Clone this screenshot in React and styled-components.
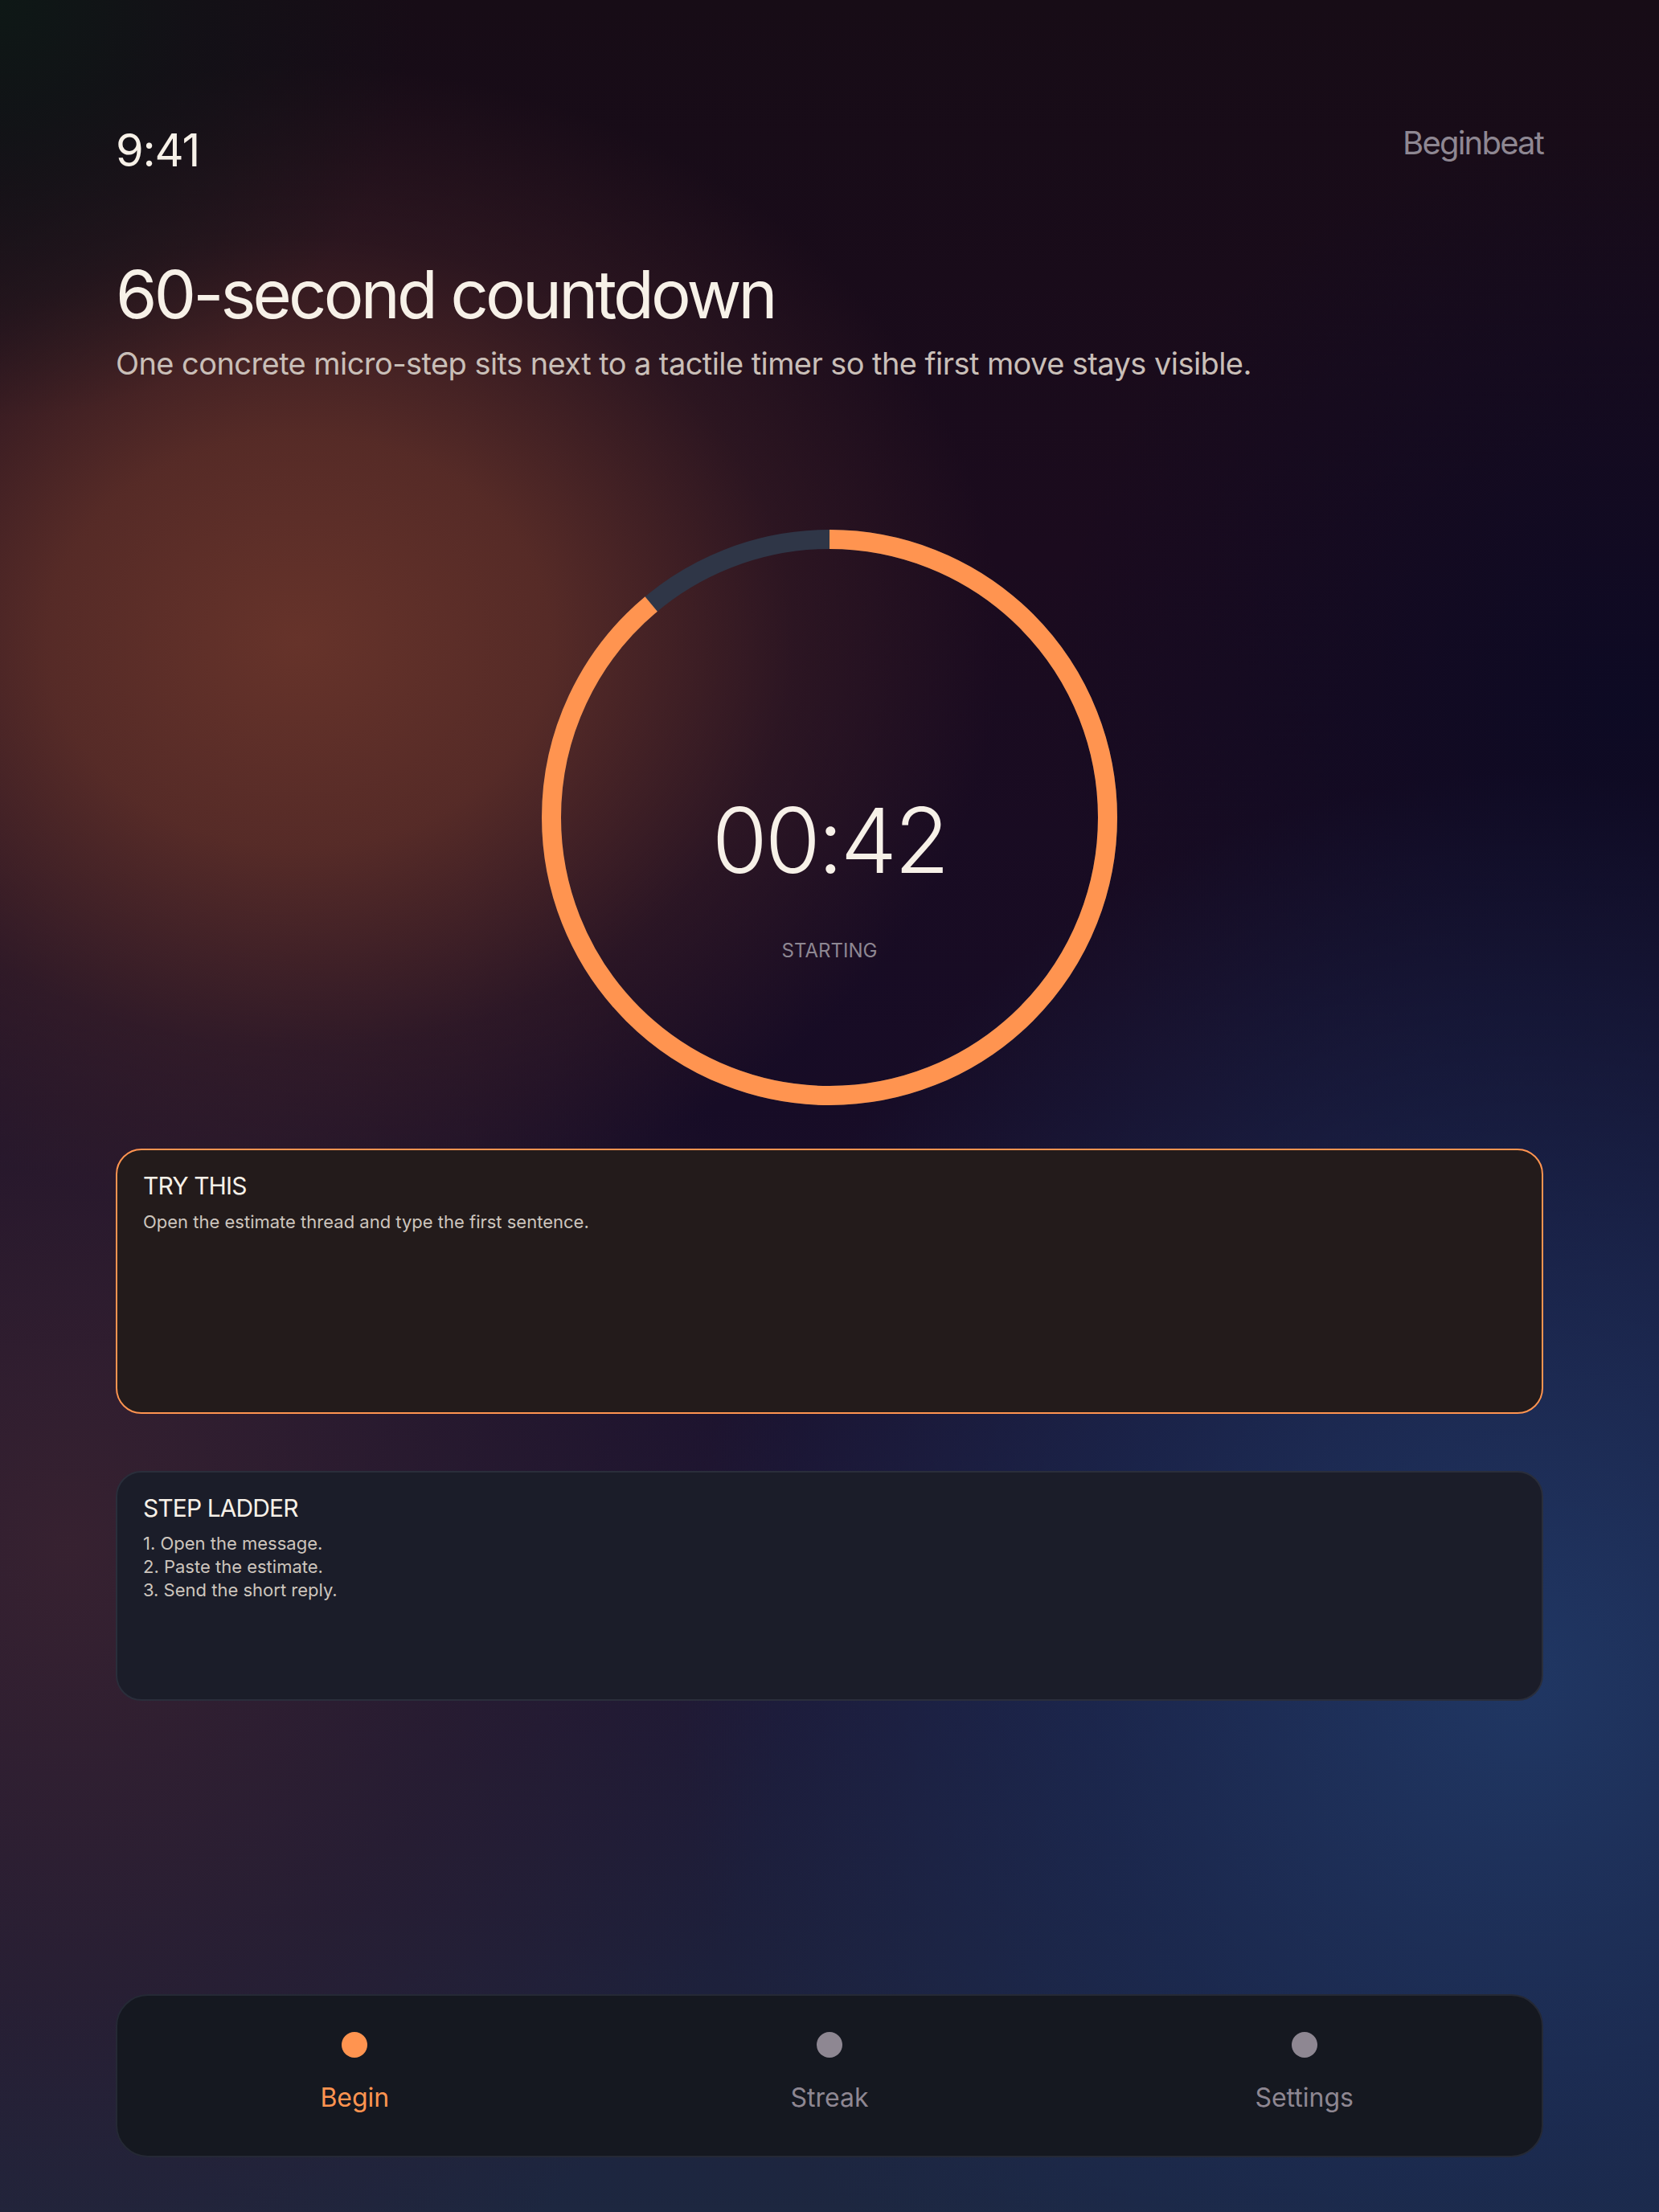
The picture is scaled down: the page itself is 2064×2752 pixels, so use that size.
import React from "react";
import styled, { createGlobalStyle } from "styled-components";

const GlobalStyle = createGlobalStyle`
  html, body { margin: 0; padding: 0; background: #160c1d; }
  body {
    font-family: Inter, "Noto Sans", "Liberation Sans", sans-serif;
    -webkit-font-smoothing: antialiased;
  }
  *, *::before, *::after { box-sizing: border-box; }
`;

const ORANGE = "#ff9450";
const CREAM = "#f7f1e8";
const MUTED = "#8e8792";

const Screen = styled.div`
  min-height: 100vh;
  display: flex;
  flex-direction: column;
  padding: 154px 144px 68px;
  background:
    radial-gradient(circle 520px at 0% 0%, rgba(14, 24, 22, 1) 0%, rgba(16, 20, 22, 0.6) 45%, rgba(16, 18, 22, 0) 100%),
    radial-gradient(ellipse 1120px 920px at 18% 29%, rgba(102, 51, 42, 1) 0%, rgba(94, 47, 40, 0.88) 28%, rgba(68, 35, 38, 0.42) 55%, rgba(44, 22, 34, 0) 78%),
    radial-gradient(ellipse 1350px 1450px at 92% 76%, rgba(32, 58, 104, 0.9) 0%, rgba(26, 46, 90, 0.6) 40%, rgba(20, 24, 56, 0) 78%),
    radial-gradient(ellipse 900px 900px at 98% 32%, rgba(12, 10, 36, 0.9) 0%, rgba(12, 10, 36, 0) 80%),
    radial-gradient(ellipse 1150px 1350px at 4% 70%, rgba(56, 34, 48, 0.95) 0%, rgba(46, 29, 46, 0.55) 45%, rgba(40, 26, 44, 0) 80%),
    linear-gradient(180deg, #170c16 0%, #1b0b1e 25%, #170c26 50%, #1d1634 72%, #1d2740 100%);
`;

const TopBar = styled.header`
  display: flex;
  justify-content: space-between;
  align-items: flex-start;
`;

const Clock = styled.div`
  font-size: 56px;
  line-height: 1.2;
  font-weight: 400;
  letter-spacing: -0.02em;
  color: ${CREAM};
`;

const Brand = styled.div`
  font-size: 40px;
  line-height: 1.2;
  font-weight: 400;
  letter-spacing: -0.045em;
  color: ${MUTED};
`;

const Heading = styled.h1`
  margin: 96px 0 0;
  font-size: 83px;
  line-height: 1.2;
  font-weight: 400;
  letter-spacing: -0.046em;
  color: ${CREAM};
`;

const Lead = styled.p`
  margin: 13px 0 0;
  font-size: 38px;
  line-height: 1.2;
  font-weight: 400;
  letter-spacing: -0.015em;
  color: #c9bfb8;
`;

const RingWrap = styled.div`
  align-self: center;
  display: grid;
  width: 716px;
  height: 716px;
  margin-top: 184px;
  & > * { grid-area: 1 / 1; }
`;

const RingCenter = styled.div`
  display: flex;
  flex-direction: column;
  align-items: center;
  padding-top: 330px;
`;

const TimeText = styled.div`
  font-size: 112px;
  line-height: 1;
  font-weight: 300;
  letter-spacing: -0.03em;
  color: ${CREAM};
`;

const Status = styled.div`
  margin-top: 68px;
  font-size: 24px;
  line-height: 1.2;
  color: ${MUTED};
  text-transform: uppercase;
`;

const Card = styled.section`
  min-height: ${(p) => p.$minH}px;
  margin-top: ${(p) => p.$mt}px;
  padding: 26px 32px;
  border-radius: 32px;
  border: 2px solid ${(p) => (p.$accent ? ORANGE : "#2a2e3b")};
  background: ${(p) => (p.$accent ? "#231b1b" : "#1b1d29")};
`;

const CardTitle = styled.h2`
  margin: 0;
  font-size: 30px;
  line-height: 1.2;
  font-weight: 400;
  letter-spacing: -0.03em;
  color: ${CREAM};
  text-transform: uppercase;
`;

const CardText = styled.p`
  margin: 14px 0 0;
  font-size: 22px;
  line-height: 1.2;
  color: #cdc5bd;
`;

const Steps = styled.ol`
  margin: 12px 0 0;
  padding: 0;
  list-style: none;
`;

const Step = styled.li`
  font-size: 22px;
  line-height: 1.3;
  color: #cdc5bd;
`;

const Nav = styled.nav`
  margin-top: auto;
  display: grid;
  grid-template-columns: repeat(3, 1fr);
  padding: 45px 0 53px;
  border-radius: 40px;
  border: 2px solid #252935;
  background: #151820;
`;

const NavItem = styled.div`
  display: flex;
  flex-direction: column;
  align-items: center;
  gap: 31px;
`;

const Dot = styled.span`
  width: 32px;
  height: 32px;
  border-radius: 50%;
  background: ${(p) => (p.$active ? ORANGE : MUTED)};
`;

const NavLabel = styled.span`
  font-size: 32px;
  line-height: 1.2;
  color: ${(p) => (p.$active ? ORANGE : MUTED)};
`;

function Ring({ size = 716, stroke = 24, progress = 320 / 360 }) {
  const r = (size - stroke) / 2;
  const c = 2 * Math.PI * r;
  return (
    <svg width={size} height={size} viewBox={`0 0 ${size} ${size}`}>
      <circle cx={size / 2} cy={size / 2} r={r} fill="none" stroke="#2f3647" strokeWidth={stroke} />
      <circle
        cx={size / 2}
        cy={size / 2}
        r={r}
        fill="none"
        stroke={ORANGE}
        strokeWidth={stroke}
        strokeDasharray={`${c * progress} ${c}`}
        transform={`rotate(-90 ${size / 2} ${size / 2})`}
      />
    </svg>
  );
}

const tabs = [
  { label: "Begin", active: true },
  { label: "Streak" },
  { label: "Settings" },
];

export default function App() {
  return (
    <>
      <GlobalStyle />
      <Screen>
        <TopBar>
          <Clock>9:41</Clock>
          <Brand>Beginbeat</Brand>
        </TopBar>
        <Heading>60-second countdown</Heading>
        <Lead>One concrete micro-step sits next to a tactile timer so the first move stays visible.</Lead>

        <RingWrap>
          <Ring />
          <RingCenter>
            <TimeText>00:42</TimeText>
            <Status>Starting</Status>
          </RingCenter>
        </RingWrap>

        <Card $accent $minH={330} $mt={54}>
          <CardTitle>Try this</CardTitle>
          <CardText>Open the estimate thread and type the first sentence.</CardText>
        </Card>

        <Card $minH={286} $mt={71}>
          <CardTitle>Step ladder</CardTitle>
          <Steps>
            <Step>1. Open the message.</Step>
            <Step>2. Paste the estimate.</Step>
            <Step>3. Send the short reply.</Step>
          </Steps>
        </Card>

        <Nav>
          {tabs.map((t) => (
            <NavItem key={t.label}>
              <Dot $active={t.active} />
              <NavLabel $active={t.active}>{t.label}</NavLabel>
            </NavItem>
          ))}
        </Nav>
      </Screen>
    </>
  );
}
